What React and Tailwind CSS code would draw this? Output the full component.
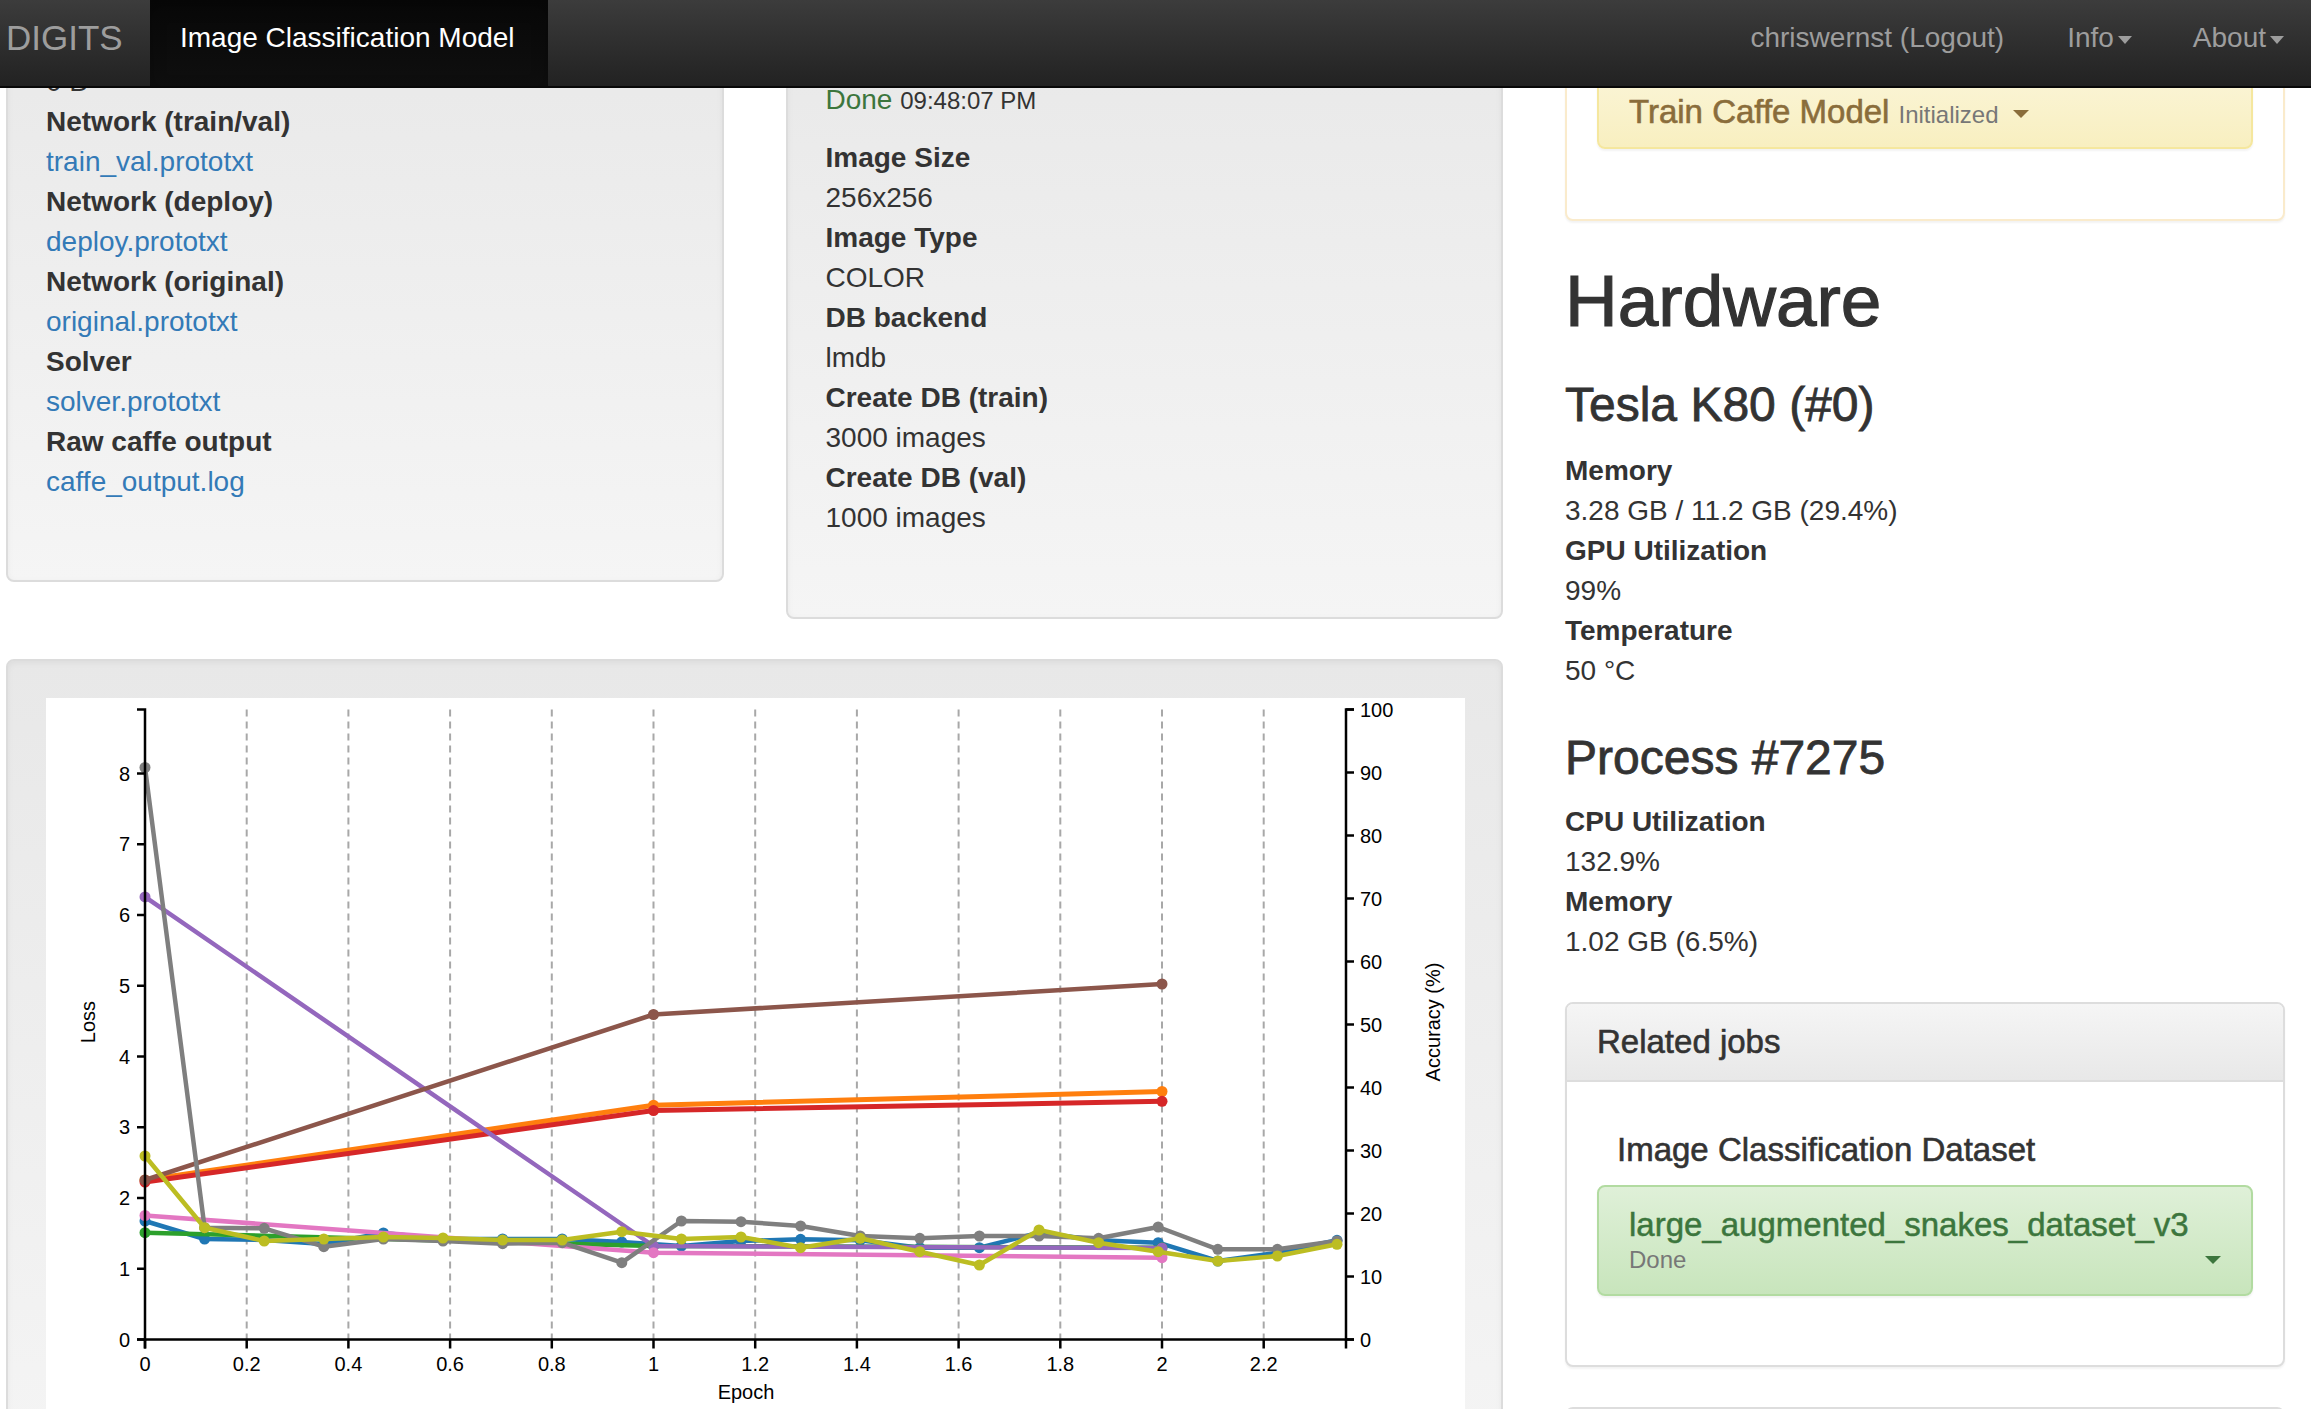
import React from "react";

const X0 = 145;
const EPX = 508.5;
const Y0 = 1338.5;
const TOP = 708.5;
const RIGHT = 1346;

const trainX = (i) => X0 + i * 59.6;
const valX = [X0, X0 + EPX, X0 + 2 * EPX];

const train = {
  gray: [766.5, 1226.7, 1227.3, 1245.7, 1238, 1240, 1242.7, 1241.7, 1261.7, 1220, 1220.7, 1225, 1235, 1237.3, 1235, 1235, 1237.3, 1226, 1248.3, 1248.3, 1240],
  olive: [1155, 1226.7, 1240, 1238, 1236, 1237, 1239, 1239, 1230.7, 1238, 1236, 1246.7, 1237.3, 1250.7, 1264, 1229, 1241.7, 1250.7, 1260, 1255, 1243.3],
  blue: [1220, 1238, 1239, 1243, 1232, 1238, 1238, 1238, 1241, 1245, 1240, 1238.3, 1239.3, 1246.7, 1246.7, 1231.7, 1239.3, 1241.7, 1260, 1251.7, 1239.3],
};

const series = [
  { c: "#1f77b4", pts: train.blue.map((y, i) => [trainX(i), y]) },
  { c: "#ff7f0e", pts: [1179, 1104.2, 1090.5].map((y, i) => [valX[i], y]), w: 5 },
  { c: "#2ca02c", pts: [1231.7, 1245, 1246.7].map((y, i) => [valX[i], y]) },
  { c: "#d62728", pts: [1181, 1109.6, 1100.3].map((y, i) => [valX[i], y]), w: 5 },
  { c: "#9467bd", pts: [895.9, 1245, 1247].map((y, i) => [valX[i], y]) },
  { c: "#8c564b", pts: [1179, 1013.5, 983].map((y, i) => [valX[i], y]) },
  { c: "#e377c2", pts: [1214.5, 1251.7, 1256.7].map((y, i) => [valX[i], y]) },
  { c: "#7f7f7f", pts: train.gray.map((y, i) => [trainX(i), y]) },
  { c: "#bcbd22", pts: train.olive.map((y, i) => [trainX(i), y]) },
];

const xTicks = ["0", "0.2", "0.4", "0.6", "0.8", "1", "1.2", "1.4", "1.6", "1.8", "2", "2.2"];
const lossStep = 70.75;
const accStep = 63;

function Chart() {
  const font = "'Liberation Sans', Arial, sans-serif";
  return (
    <svg width="1419" height="760" viewBox="46 697 1419 760" className="block">
      <rect x="46" y="697" width="1419" height="760" fill="#fff" />
      {xTicks.slice(1).map((t, i) => {
        const x = X0 + (i + 1) * 0.2 * EPX;
        return (
          <line key={t} x1={x} x2={x} y1={TOP} y2={Y0} stroke="#a8a8a8" strokeWidth="2" strokeDasharray="7 5" />
        );
      })}
      {series.map((s, k) => (
        <g key={k}>
          <polyline
            points={s.pts.map((p) => p.join(",")).join(" ")}
            fill="none"
            stroke={s.c}
            strokeWidth={s.w || 4.5}
            strokeLinejoin="round"
          />
          {s.pts.map((p, j) => (
            <circle key={j} cx={p[0]} cy={p[1]} r="5.5" fill={s.c} />
          ))}
        </g>
      ))}
      {/* left axis */}
      <path d={`M137,${TOP}H${X0}V${Y0}H137`} fill="none" stroke="#000" strokeWidth="2.5" />
      {Array.from({ length: 9 }, (_, k) => {
        const y = Y0 - k * lossStep;
        return (
          <g key={k}>
            <line x1="137" x2={X0} y1={y} y2={y} stroke="#000" strokeWidth="2.5" />
            <text x="130" y={y + 7} textAnchor="end" fontSize="20" fontFamily={font} fill="#000">
              {k}
            </text>
          </g>
        );
      })}
      {/* right axis */}
      <path d={`M${RIGHT + 8},${TOP}H${RIGHT}V${Y0}H${RIGHT + 8}`} fill="none" stroke="#000" strokeWidth="2.5" />
      {Array.from({ length: 11 }, (_, k) => {
        const y = Y0 - k * accStep;
        return (
          <g key={k}>
            <line x1={RIGHT} x2={RIGHT + 8} y1={y} y2={y} stroke="#000" strokeWidth="2.5" />
            <text x={RIGHT + 14} y={y + 7} fontSize="20" fontFamily={font} fill="#000">
              {k * 10}
            </text>
          </g>
        );
      })}
      {/* x axis */}
      <path d={`M${X0},${Y0 + 9}V${Y0}H${RIGHT}V${Y0 + 9}`} fill="none" stroke="#000" strokeWidth="2.5" />
      {xTicks.map((t, i) => {
        const x = X0 + i * 0.2 * EPX;
        return (
          <g key={t}>
            <line x1={x} x2={x} y1={Y0} y2={Y0 + 9} stroke="#000" strokeWidth="2.5" />
            <text x={x} y="1370" textAnchor="middle" fontSize="20" fontFamily={font} fill="#000">
              {t}
            </text>
          </g>
        );
      })}
      <text x="746" y="1398" textAnchor="middle" fontSize="20" fontFamily={font} fill="#000">
        Epoch
      </text>
      <text transform="translate(95,1021) rotate(-90)" textAnchor="middle" fontSize="20" fontFamily={font} fill="#000">
        Loss
      </text>
      <text transform="translate(1440,1021) rotate(-90)" textAnchor="middle" fontSize="20" fontFamily={font} fill="#000">
        Accuracy (%)
      </text>
    </svg>
  );
}

function Caret({ className }) {
  return (
    <span
      className={`inline-block h-0 w-0 border-x-[7px] border-t-[8px] border-x-transparent align-middle ${className}`}
    />
  );
}

function Row({ label, children, link }) {
  return (
    <>
      <dt className="font-bold">{label}</dt>
      <dd className={link ? "text-[#337ab7]" : ""}>{children}</dd>
    </>
  );
}

const well =
  "rounded-[8px] border-2 border-[#dcdcdc] bg-gradient-to-b from-[#e8e8e8] to-[#f5f5f5] shadow-[inset_0_2px_6px_rgba(0,0,0,0.05)]";

export default function App() {
  return (
    <div className="relative h-[1409px] w-full overflow-hidden bg-white font-['Liberation_Sans',Arial,sans-serif] text-[28px] leading-[40px] text-[#333]">
      {/* fixed navbar */}
      <nav className="fixed inset-x-0 top-0 z-10 flex h-[88px] border-b-2 border-[#080808] bg-gradient-to-b from-[#3c3c3c] to-[#222]">
        <div className="w-[150px] pl-[6px] pt-[18px] text-[35px] leading-[40px] text-[#9d9d9d]">DIGITS</div>
        <div className="w-[398px] bg-gradient-to-b from-[#080808] to-[#0f0f0f] px-[30px] pt-[18px] text-white shadow-[inset_0_6px_16px_rgba(0,0,0,0.25)]">
          Image Classification Model
        </div>
        <div className="ml-auto flex pt-[18px] text-[#9d9d9d]">
          <span className="px-[32px]">chriswernst (Logout)</span>
          <span className="px-[31px]">
            Info
            <Caret className="ml-[4px] border-t-[#9d9d9d]" />
          </span>
          <span className="pl-[30px] pr-[27px]">
            About
            <Caret className="ml-[4px] border-t-[#9d9d9d]" />
          </span>
        </div>
      </nav>

      <main className="flex gap-[62px] pl-[6px]">
        {/* left 8 columns */}
        <div className="flex w-[1497px] flex-col">
          <div className="grid grid-cols-2 items-start gap-x-[62px]">
            <div className={`${well} px-[38px] pb-[38px] pt-[20px]`}>
              <dl className="mb-[40px]">
                <dt className="h-[40px]" aria-hidden="true" />
                <dd>0 B</dd>
                <Row label="Network (train/val)" link>train_val.prototxt</Row>
                <Row label="Network (deploy)" link>deploy.prototxt</Row>
                <Row label="Network (original)" link>original.prototxt</Row>
                <Row label="Solver" link>solver.prototxt</Row>
                <Row label="Raw caffe output" link>caffe_output.log</Row>
              </dl>
            </div>
            <div className={`${well} px-[38px] pb-[39px] pt-[38px]`}>
              <div className="h-[40px]" aria-hidden="true" />
              <p className="mb-[17px]">
                <span className="text-[#3c763d]">Done</span> <small className="text-[24px]">09:48:07 PM</small>
              </p>
              <dl className="mb-[40px]">
                <Row label="Image Size">256x256</Row>
                <Row label="Image Type">COLOR</Row>
                <Row label="DB backend">lmdb</Row>
                <Row label="Create DB (train)">3000 images</Row>
                <Row label="Create DB (val)">1000 images</Row>
              </dl>
            </div>
          </div>
          <div className={`${well} mt-[40px] px-[38px] pb-[38px] pt-[37px]`}>
            <Chart />
          </div>
        </div>

        {/* right 4 columns */}
        <div className="w-[720px] shrink-0">
          <div className="rounded-[8px] border-2 border-[#faebcc] bg-white p-[30px] shadow-[0_2px_2px_rgba(0,0,0,0.05)]">
            <div className="mb-[40px] rounded-[8px] border-2 border-[#f5e79e] bg-gradient-to-b from-[#fcf8e3] to-[#f8efc0] px-[30px] pb-[12px] pt-[58px] shadow-[0_2px_2px_rgba(0,0,0,0.05)]">
              <div className="flex items-baseline leading-[40px]">
                <span className="text-[33px] text-[#8a6d3b] [-webkit-text-stroke:0.6px_#8a6d3b]">Train Caffe Model</span>
                <span className="ml-[9px] text-[24px] text-[#777]">Initialized</span>
                <Caret className="ml-[14px] self-center border-x-[8px] border-t-[#8a6d3b]" />
              </div>
            </div>
          </div>

          <h1 className="mt-[40px] text-[73px] leading-[79px] [-webkit-text-stroke:1.2px_#333]">Hardware</h1>
          <h3 className="mt-[38px] text-[48px] leading-[53px] [-webkit-text-stroke:0.8px_#333]">Tesla K80 (#0)</h3>
          <dl className="mt-[20px] mb-[40px]">
            <Row label="Memory">3.28 GB / 11.2 GB (29.4%)</Row>
            <Row label="GPU Utilization">99%</Row>
            <Row label="Temperature">50 °C</Row>
          </dl>
          <h3 className="text-[48px] leading-[53px] [-webkit-text-stroke:0.8px_#333]">Process #7275</h3>
          <dl className="mt-[18px] mb-[40px]">
            <Row label="CPU Utilization">132.9%</Row>
            <Row label="Memory">1.02 GB (6.5%)</Row>
          </dl>

          <div className="rounded-[8px] border-2 border-[#ddd] bg-white shadow-[0_2px_2px_rgba(0,0,0,0.05)]">
            <div className="rounded-t-[6px] border-b-2 border-[#ddd] bg-gradient-to-b from-[#f5f5f5] to-[#e8e8e8] px-[30px] py-[20px] text-[33px] leading-[36px] [-webkit-text-stroke:0.6px_#333]">
              Related jobs
            </div>
            <div className="px-[30px] pb-[30px] pt-[30px]">
              <h4 className="ml-[20px] mt-[20px] mb-[17px] text-[33px] leading-[36px] [-webkit-text-stroke:0.6px_#333]">
                Image Classification Dataset
              </h4>
              <div className="mb-[39px] rounded-[8px] border-2 border-[#b2dba1] bg-gradient-to-b from-[#dff0d8] to-[#c8e5bc] px-[30px] pb-[17px] pt-[20px] shadow-[0_2px_2px_rgba(0,0,0,0.05)]">
                <div className="text-[33px] leading-[36px] text-[#3c763d] [-webkit-text-stroke:0.5px_#3c763d]">
                  large_augmented_snakes_dataset_v3
                </div>
                <div className="flex items-center justify-between text-[24px] leading-[34px] text-[#777]">
                  <span>Done</span>
                  <Caret className="border-x-[8px] border-t-[#3c763d]" />
                </div>
              </div>
            </div>
          </div>

          <div className="mt-[40px] h-[200px] rounded-[8px] border-2 border-[#ddd] bg-white" />
        </div>
      </main>
    </div>
  );
}
